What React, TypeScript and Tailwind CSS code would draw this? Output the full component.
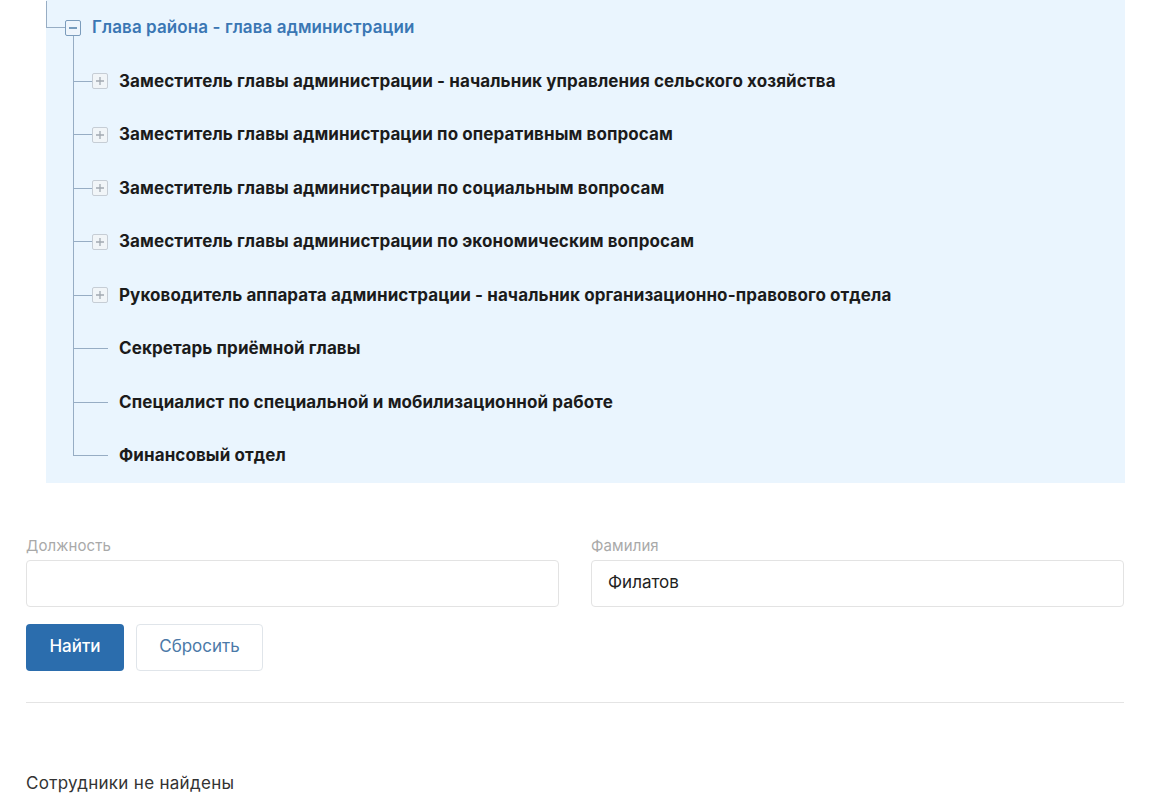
import React from "react";

type Item = { title: string; expandable: boolean };

const children: Item[] = [
  { title: "Заместитель главы администрации - начальник управления сельского хозяйства", expandable: true },
  { title: "Заместитель главы администрации по оперативным вопросам", expandable: true },
  { title: "Заместитель главы администрации по социальным вопросам", expandable: true },
  { title: "Заместитель главы администрации по экономическим вопросам", expandable: true },
  { title: "Руководитель аппарата администрации - начальник организационно-правового отдела", expandable: true },
  { title: "Секретарь приёмной главы", expandable: false },
  { title: "Специалист по специальной и мобилизационной работе", expandable: false },
  { title: "Финансовый отдел", expandable: false },
];

const LINE = "border-[#97adc4]";

const Connector: React.FC<{ last?: boolean; width: string }> = ({ last, width }) => (
  <div className={`flex flex-col self-stretch ${width}`}>
    <div className={`flex-1 border-l border-b ${LINE}`} />
    <div className={`flex-1 ${last ? "" : `border-l ${LINE}`}`} />
  </div>
);

const PlusBox = () => (
  <div className="w-[16px] h-[16px] border border-[#c6cdd5] rounded-[2px] bg-[#f1f5f8] flex items-center justify-center">
    <svg width="10" height="10" viewBox="0 0 10 10">
      <path d="M5 1v8M1 5h8" stroke="#a2a9b1" strokeWidth="1.3" />
    </svg>
  </div>
);

const MinusBox = () => (
  <div className="w-[16px] h-[16px] border border-[#7b9cbc] rounded-[2px] bg-[#eef5fc] flex items-center justify-center">
    <svg width="10" height="10" viewBox="0 0 10 10">
      <path d="M1 5h8" stroke="#4f7ea9" strokeWidth="1.5" />
    </svg>
  </div>
);

export default function App() {
  const font = { fontFamily: "Inter, 'Noto Sans', sans-serif" };
  return (
    <div className="w-[1150px] h-[800px] bg-white overflow-hidden" style={font}>
      {/* tree panel */}
      <div className="ml-[46px] w-[1079px] bg-[#eaf5fe] pt-[1px]">
        <div className="flex h-[53.5px] items-stretch">
          <div className="flex flex-col w-[19px]">
            <div className={`flex-1 border-l border-b ${LINE}`} />
            <div className="flex-1" />
          </div>
          <div className="flex flex-col items-center w-[16px]">
            <div className="flex-1" />
            <MinusBox />
            <div className={`flex-1 border-l ${LINE}`} />
          </div>
          <div className="flex items-center ml-[11px] text-[17px] font-semibold tracking-[0.1px] text-[#3a77b4]">
            Глава района - глава администрации
          </div>
        </div>
        <div className="ml-[27px]">
          {children.map((c, i) => (
            <div key={i} className="flex h-[53.5px] items-center">
              <Connector last={i === children.length - 1} width="w-[19px]" />
              {c.expandable ? (
                <PlusBox />
              ) : (
                <div className={`w-[16px] border-b ${LINE} self-center`} />
              )}
              <div className="ml-[11px] text-[17px] font-bold tracking-[0.1px] text-[#1b1b1b]">{c.title}</div>
            </div>
          ))}
        </div>
      </div>

      {/* search form */}
      <div className="px-[26px] w-[1150px]">
        <div className="grid grid-cols-2 gap-[32px] mt-[53px]">
          <div>
            <div className="text-[15px] leading-[20px] text-[#a9a9a9] mb-[4px] tracking-[0.1px]">Должность</div>
            <div className="h-[47px] border border-[#e3e3e3] rounded-[4px] bg-white" />
          </div>
          <div>
            <div className="text-[15px] leading-[20px] text-[#a9a9a9] mb-[4px] tracking-[0.1px]">Фамилия</div>
            <div className="h-[47px] border border-[#e3e3e3] rounded-[4px] bg-white flex items-center px-[16px] text-[17px] text-[#222]">
              Филатов
            </div>
          </div>
        </div>
        <div className="flex gap-[12px] mt-[17px]">
          <button className="w-[98px] h-[47px] rounded-[4px] bg-[#2b6dad] text-white text-[17px] font-medium">
            Найти
          </button>
          <button className="w-[127px] h-[47px] rounded-[4px] border border-[#e0e5ea] bg-white text-[#4b79a8] text-[17px]">
            Сбросить
          </button>
        </div>
        <div className="mt-[31px] border-t border-[#e4e4e4]" />
        <div className="mt-[69px] text-[17px] leading-[22px] text-[#333] tracking-[0.3px]">Сотрудники не найдены</div>
      </div>
    </div>
  );
}
